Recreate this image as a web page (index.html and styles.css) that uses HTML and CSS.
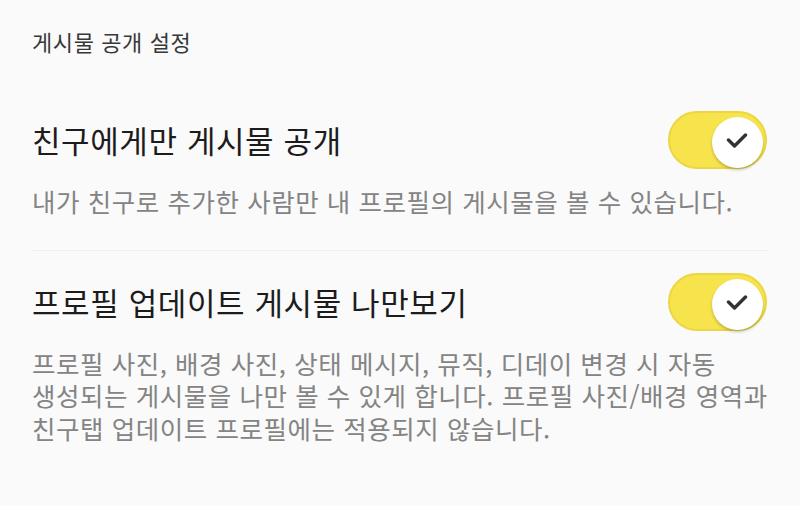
FILE: index.html
```html
<!DOCTYPE html>
<html lang="ko">
<head>
    <meta charset="UTF-8">
    <meta name="viewport" content="width=device-width, initial-scale=1.0">
    <title>게시물 공개 설정</title>
    <link rel="stylesheet" href="styles.css">
</head>
<body>
    <div class="page">
        <h3 class="group-title">게시물 공개 설정</h3>

        <div class="setting">
            <div class="setting-head">
                <span class="setting-name">친구에게만 게시물 공개</span>
                <span class="switch on">
                    <span class="knob">
                        <svg width="22" height="16" viewBox="0 0 22 16"><polyline points="2.5,8 8.5,14 19.5,3" /></svg>
                    </span>
                </span>
            </div>
            <p class="setting-desc">내가 친구로 추가한 사람만 내 프로필의 게시물을 볼 수 있습니다.</p>
        </div>

        <div class="setting">
            <div class="setting-head">
                <span class="setting-name">프로필 업데이트 게시물 나만보기</span>
                <span class="switch on">
                    <span class="knob">
                        <svg width="22" height="16" viewBox="0 0 22 16"><polyline points="2.5,8 8.5,14 19.5,3" /></svg>
                    </span>
                </span>
            </div>
            <p class="setting-desc">프로필 사진, 배경 사진, 상태 메시지, 뮤직, 디데이 변경 시 자동 생성되는 게시물을 나만 볼 수 있게 합니다. 프로필 사진/배경 영역과 친구탭 업데이트 프로필에는 적용되지 않습니다.</p>
        </div>
    </div>
</body>
</html>
```

FILE: styles.css
```css
body {
    margin: 0;
    padding: 0;
    background-color: #fafafa;
    font-family: "Noto Sans CJK KR", "Noto Sans", sans-serif;
    color: #1c1c1c;
    word-break: keep-all;
}
.page {
    padding: 26px 32px 0;
}
.group-title {
    margin: 0 0 33px;
    font-size: 22px;
    font-weight: 400;
    letter-spacing: 0.6px;
    line-height: 30px;
    color: #383838;
}
.setting {
    padding: 22px 0 33px;
    border-bottom: 1px solid #f0f0f0;
}
.setting:last-child {
    border-bottom: none;
}
.setting-head {
    display: flex;
    justify-content: space-between;
    align-items: center;
}
.setting-name {
    font-size: 31px;
    letter-spacing: 0.6px;
    line-height: 40px;
}
.setting-desc {
    margin: 15.5px 0 0;
    font-size: 25.5px;
    letter-spacing: 0.55px;
    line-height: 32.5px;
    color: #848484;
}
.switch {
    position: relative;
    display: block;
    width: 95px;
    height: 54px;
    margin-right: 1px;
    border: 2px solid #ebd743;
    border-radius: 29px;
    background-color: #e0e0e0;
    flex-shrink: 0;
}
.switch.on {
    background-color: #f7e34b;
}
.knob {
    position: absolute;
    top: 4px;
    right: 2px;
    width: 51px;
    height: 51px;
    border-radius: 50%;
    background: #fff;
    box-shadow: 0 2px 3px rgba(0, 0, 0, 0.22);
    display: flex;
    justify-content: center;
    align-items: center;
}
.knob svg {
    margin-top: -5px;
    margin-left: -2px;
}
.knob polyline {
    fill: none;
    stroke: #333;
    stroke-width: 3.4;
    stroke-linecap: round;
    stroke-linejoin: round;
}
```
